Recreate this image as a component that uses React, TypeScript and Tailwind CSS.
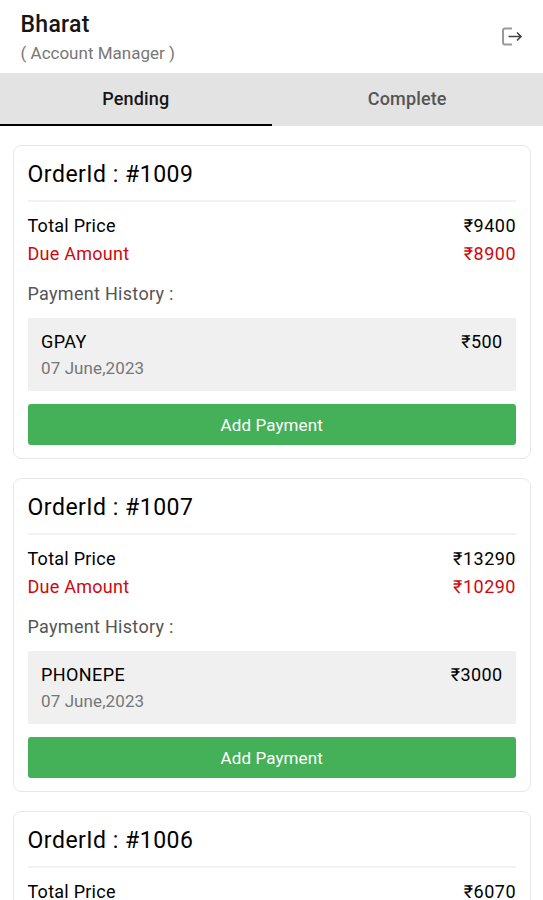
type Payment = { method: string; date: string; amount: number };

type Order = {
  id: number;
  total: number;
  due: number;
  payments: Payment[];
};

const orders: Order[] = [
  { id: 1009, total: 9400, due: 8900, payments: [{ method: "GPAY", date: "07 June,2023", amount: 500 }] },
  { id: 1007, total: 13290, due: 10290, payments: [{ method: "PHONEPE", date: "07 June,2023", amount: 3000 }] },
  { id: 1006, total: 6070, due: 6070, payments: [] },
];

function LogoutIcon() {
  return (
    <svg width="22" height="20" viewBox="0 0 22 20" fill="none">
      <path d="M11 1.5H4Q2 1.5 2 3.5V15.5Q2 17.5 4 17.5H11" stroke="#999" strokeWidth="2" />
      <path d="M7.5 9.5H20M16 5.5L20 9.5L16 13.5" stroke="#444" strokeWidth="1.6" />
    </svg>
  );
}

function Header() {
  return (
    <header className="flex h-[73px] shrink-0 items-center justify-between pl-[20.5px] pr-5">
      <div className="flex flex-col pt-px">
        <h1 className="text-[23px] font-medium leading-[32px] tracking-[0.3px] text-[#161616]">Bharat</h1>
        <p className="text-[17px] leading-[25px] text-[#777]">( Account Manager )</p>
      </div>
      <button aria-label="Log out">
        <LogoutIcon />
      </button>
    </header>
  );
}

function Tabs() {
  return (
    <nav className="flex h-[53px] shrink-0 bg-[#e3e3e3] text-[18px] font-medium tracking-[0.15px]">
      <button className="flex-1 border-b-2 border-black text-[#161616]">Pending</button>
      <button className="flex-1 border-b-2 border-transparent text-[#555]">Complete</button>
    </nav>
  );
}

function OrderCard({ id, total, due, payments }: Order) {
  return (
    <article className="flex h-[314px] shrink-0 flex-col rounded-lg border border-[#e8e8e8] pl-[13.5px] pr-3.5">
      <h2 className="h-[56px] border-b-2 border-[#f2f2f2] text-[23px] leading-[57px] tracking-[0.5px] text-black">
        OrderId : #{id}
      </h2>
      <dl className="mt-2.5 text-[18px] leading-[28px] tracking-[0.25px]">
        <div className="flex justify-between text-black">
          <dt>Total Price</dt>
          <dd className="tracking-[0.5px]">₹{total}</dd>
        </div>
        <div className="flex justify-between text-[#d0070c]">
          <dt>Due Amount</dt>
          <dd className="tracking-[0.5px]">₹{due}</dd>
        </div>
      </dl>
      <h3 className="mt-3 text-[18px] leading-[28px] tracking-[0.3px] text-[#555]">Payment History :</h3>
      {payments.map((p) => (
        <div
          key={p.method}
          className="mt-2.5 flex h-[73px] justify-between bg-[#f0f0f0] px-[13.5px] pt-2.5 text-[18px] leading-[27px]"
        >
          <div>
            <p className="tracking-[0.4px] text-black">{p.method}</p>
            <p className="text-[17px] leading-[26px] tracking-[0.1px] text-[#777]">{p.date}</p>
          </div>
          <p className="tracking-[0.4px] text-black">₹{p.amount}</p>
        </div>
      ))}
      <button className="mt-[13px] h-[41px] rounded-[3px] bg-[#44b058] pt-0.5 text-[17px] tracking-[0.1px] text-white">
        Add Payment
      </button>
    </article>
  );
}

export default function App() {
  return (
    <div className="flex h-[900px] w-[543px] flex-col overflow-hidden bg-white font-['Roboto',sans-serif]">
      <Header />
      <Tabs />
      <main className="flex flex-col gap-[19px] pl-[13px] pr-3 pt-[19px]">
        {orders.map((order) => (
          <OrderCard key={order.id} {...order} />
        ))}
      </main>
    </div>
  );
}
